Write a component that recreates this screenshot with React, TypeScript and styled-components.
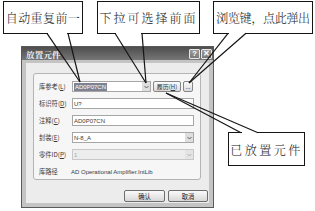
import React from "react";
import styled, { createGlobalStyle } from "styled-components";

const Global = createGlobalStyle`
  html, body { margin: 0; padding: 0; background: #fff; }
  body {
    width: 315px; height: 211px; overflow: hidden;
    font-family: "Liberation Sans", "Noto Sans CJK SC", sans-serif;
  }
`;

const Figure = styled.div`
  position: relative;
  width: 315px;
  height: 211px;
  box-sizing: border-box;
  padding: 46px 0 0 21px;
  background: #fff;
  overflow: hidden;
`;

const Window = styled.div`
  width: 193px;
  height: 162px;
  box-sizing: border-box;
  border: 1px solid #5a5a5a;
  background: #c4c4c4;
  display: flex;
  flex-direction: column;
`;

const TitleBar = styled.div`
  height: 13px;
  flex: none;
  display: flex;
  align-items: center;
  padding: 0 1px 0 4px;
  background: linear-gradient(#4e4e4e, #767676);
`;

const TitleText = styled.span`
  font-family: "Noto Serif CJK SC", "Noto Sans CJK SC", serif;
  font-size: 8.5px;
  font-weight: 700;
  color: #f0f0f0;
  letter-spacing: 0.2px;
`;

const TitleButtons = styled.div`
  margin-left: auto;
  display: flex;
  gap: 1px;
`;

const TitleButton = styled.div`
  width: 11px;
  height: 10px;
  box-sizing: border-box;
  border: 1px solid #e6e6e6;
  border-radius: 1px;
  background: linear-gradient(#9a9a9a, #7c7c7c);
  color: #fff;
  font-family: "Liberation Sans", sans-serif;
  font-size: 8px;
  font-weight: 700;
  display: flex;
  align-items: center;
  justify-content: center;
  line-height: 1;
`;

const Frame = styled.div`
  flex: 1;
  display: flex;
  padding: 3px 4px 4px 4px;
`;

const Content = styled.div`
  flex: 1;
  display: flex;
  flex-direction: column;
  background: #ececec;
  padding: 10px 1px 1px 7px;
`;

const Group = styled.div`
  height: 107px;
  box-sizing: border-box;
  margin-right: 7px;
  border: 1px solid #b4b4b4;
  border-radius: 3px;
  background: #f6f6f6;
  padding: 7px 6px 0 5px;
  display: grid;
  grid-template-columns: 33px 1fr;
  grid-auto-rows: 11px;
  row-gap: 6px;
  align-items: center;
`;

const Label = styled.span`
  font-family: "Noto Sans CJK SC", sans-serif;
  font-size: 6.3px;
  color: #3a3a3a;
  white-space: nowrap;
  u { text-decoration: underline; }
`;

const FieldLine = styled.div`
  display: flex;
  gap: 2px;
  height: 11px;
`;

const TextBox = styled.div<{ $disabled?: boolean; $w?: number }>`
  ${(p) => (p.$w ? `width: ${p.$w}px; flex: none;` : "flex: 1;")}
  height: 11px;
  box-sizing: border-box;
  border: 1px solid ${(p) => (p.$disabled ? "#c8c8c8" : "#a6a6a6")};
  background: ${(p) => (p.$disabled ? "#ededed" : "#fff")};
  color: ${(p) => (p.$disabled ? "#a8a8a8" : "#3a3a3a")};
  font-family: "Liberation Sans", sans-serif;
  font-size: 6px;
  display: flex;
  align-items: center;
  padding-left: 1px;
  white-space: nowrap;
  overflow: hidden;
`;

const Selected = styled.span`
  background: #7f8391;
  color: #fff;
  padding: 0 1px;
  line-height: 8px;
`;

const DropArrow = styled.div<{ $disabled?: boolean }>`
  margin-left: auto;
  width: 8px;
  height: 9px;
  flex: none;
  background: ${(p) => (p.$disabled ? "#e4e4e4" : "#dedede")};
  display: flex;
  align-items: center;
  justify-content: center;
`;

const SmallButton = styled.div<{ $w: number }>`
  width: ${(p) => p.$w}px;
  height: 11px;
  flex: none;
  box-sizing: border-box;
  border: 1px solid #858585;
  border-radius: 2px;
  background: linear-gradient(#fbfbfb, #dcdcdc);
  font-family: "Noto Sans CJK SC", sans-serif;
  font-size: 6px;
  color: #333;
  display: flex;
  align-items: center;
  justify-content: center;
  white-space: nowrap;
`;

const PathText = styled.span`
  font-family: "Liberation Sans", sans-serif;
  font-size: 6px;
  color: #3a3a3a;
  white-space: nowrap;
  margin-left: -1px;
`;

const ButtonRow = styled.div`
  display: flex;
  justify-content: flex-end;
  gap: 3px;
  margin-top: 10px;
`;

const DialogButton = styled.div<{ $w: number }>`
  width: ${(p) => p.$w}px;
  height: 12px;
  box-sizing: border-box;
  border: 1px solid #6e6e6e;
  border-radius: 2px;
  background: linear-gradient(#fafafa, #d8d8d8);
  font-family: "Noto Sans CJK SC", sans-serif;
  font-size: 6.3px;
  color: #222;
  display: flex;
  align-items: center;
  justify-content: center;
`;

const Callout = styled.div<{ $x: number; $y: number; $w: number; $h: number; $ls: number }>`
  position: absolute;
  left: ${(p) => p.$x}px;
  top: ${(p) => p.$y}px;
  width: ${(p) => p.$w}px;
  height: ${(p) => p.$h}px;
  box-sizing: border-box;
  border: 1.3px solid #151515;
  background: #fff;
  display: flex;
  align-items: center;
  justify-content: center;
  font-family: "Noto Serif CJK SC", "Noto Sans CJK SC", serif;
  font-size: 12px;
  font-weight: 300;
  color: #222;
  letter-spacing: ${(p) => p.$ls}px;
  white-space: nowrap;
`;

const Tails = styled.svg`
  position: absolute;
  left: 0;
  top: 0;
  width: 315px;
  height: 211px;
  pointer-events: none;
`;

const Chevron = ({ color }: { color: string }) => (
  <svg width="5" height="4" viewBox="0 0 5 4">
    <path d="M0.5 1 L2.5 3 L4.5 1" fill="none" stroke={color} strokeWidth="0.9" />
  </svg>
);

type Tail = { a: [number, number]; b: [number, number]; tip: [number, number] };

const tails: Tail[] = [
  { a: [47, 33.3], b: [68, 33.3], tip: [80, 82] },
  { a: [115, 33.3], b: [142, 33.3], tip: [146, 83] },
  { a: [228, 33.3], b: [246, 33.3], tip: [189, 83] },
  { a: [241, 132.7], b: [258, 132.7], tip: [166, 93] },
];

export default function App() {
  return (
    <>
      <Global />
      <Figure>
        <Window>
          <TitleBar>
            <TitleText>放置元件</TitleText>
            <TitleButtons>
              <TitleButton>?</TitleButton>
              <TitleButton>✕</TitleButton>
            </TitleButtons>
          </TitleBar>
          <Frame>
            <Content>
              <Group>
                <Label>库参考(<u>L</u>)</Label>
                <FieldLine>
                  <TextBox $w={79}>
                    <Selected>AD0P07CN</Selected>
                    <DropArrow>
                      <Chevron color="#555" />
                    </DropArrow>
                  </TextBox>
                  <SmallButton $w={28}>履历(<u>H</u>)</SmallButton>
                  <SmallButton $w={10}>...</SmallButton>
                </FieldLine>

                <Label>标识符(<u>D</u>)</Label>
                <TextBox>U?</TextBox>

                <Label>注释(<u>C</u>)</Label>
                <TextBox>AD0P07CN</TextBox>

                <Label>封装(<u>E</u>)</Label>
                <TextBox>
                  N-8_A
                  <DropArrow>
                    <Chevron color="#555" />
                  </DropArrow>
                </TextBox>

                <Label>零件ID(<u>P</u>)</Label>
                <TextBox $disabled>
                  1
                  <DropArrow $disabled>
                    <Chevron color="#aaa" />
                  </DropArrow>
                </TextBox>

                <Label>库路径</Label>
                <PathText>AD Operational Amplifier.IntLib</PathText>
              </Group>
              <ButtonRow>
                <DialogButton $w={41}>确认</DialogButton>
                <DialogButton $w={40}>取消</DialogButton>
              </ButtonRow>
            </Content>
          </Frame>
        </Window>

        <Callout $x={3} $y={1} $w={80} $h={33} $ls={0.4}>自动重复前一</Callout>
        <Callout $x={97} $y={1} $w={103} $h={33} $ls={2}>下拉可选择前面</Callout>
        <Callout $x={213} $y={1} $w={100} $h={33} $ls={-0.3}>浏览键，点此弹出</Callout>
        <Callout $x={228} $y={132} $w={77} $h={34} $ls={2.5}>已放置元件</Callout>

        <Tails viewBox="0 0 315 211">
          {tails.map((t, i) => (
            <g key={i}>
              <line x1={t.a[0] + 1} y1={t.a[1]} x2={t.b[0] - 1} y2={t.b[1]} stroke="#fff" strokeWidth="2.6" />
              <line x1={t.a[0]} y1={t.a[1]} x2={t.tip[0]} y2={t.tip[1]} stroke="#151515" strokeWidth="1.2" />
              <line x1={t.b[0]} y1={t.b[1]} x2={t.tip[0]} y2={t.tip[1]} stroke="#151515" strokeWidth="1.2" />
            </g>
          ))}
        </Tails>
      </Figure>
    </>
  );
}
